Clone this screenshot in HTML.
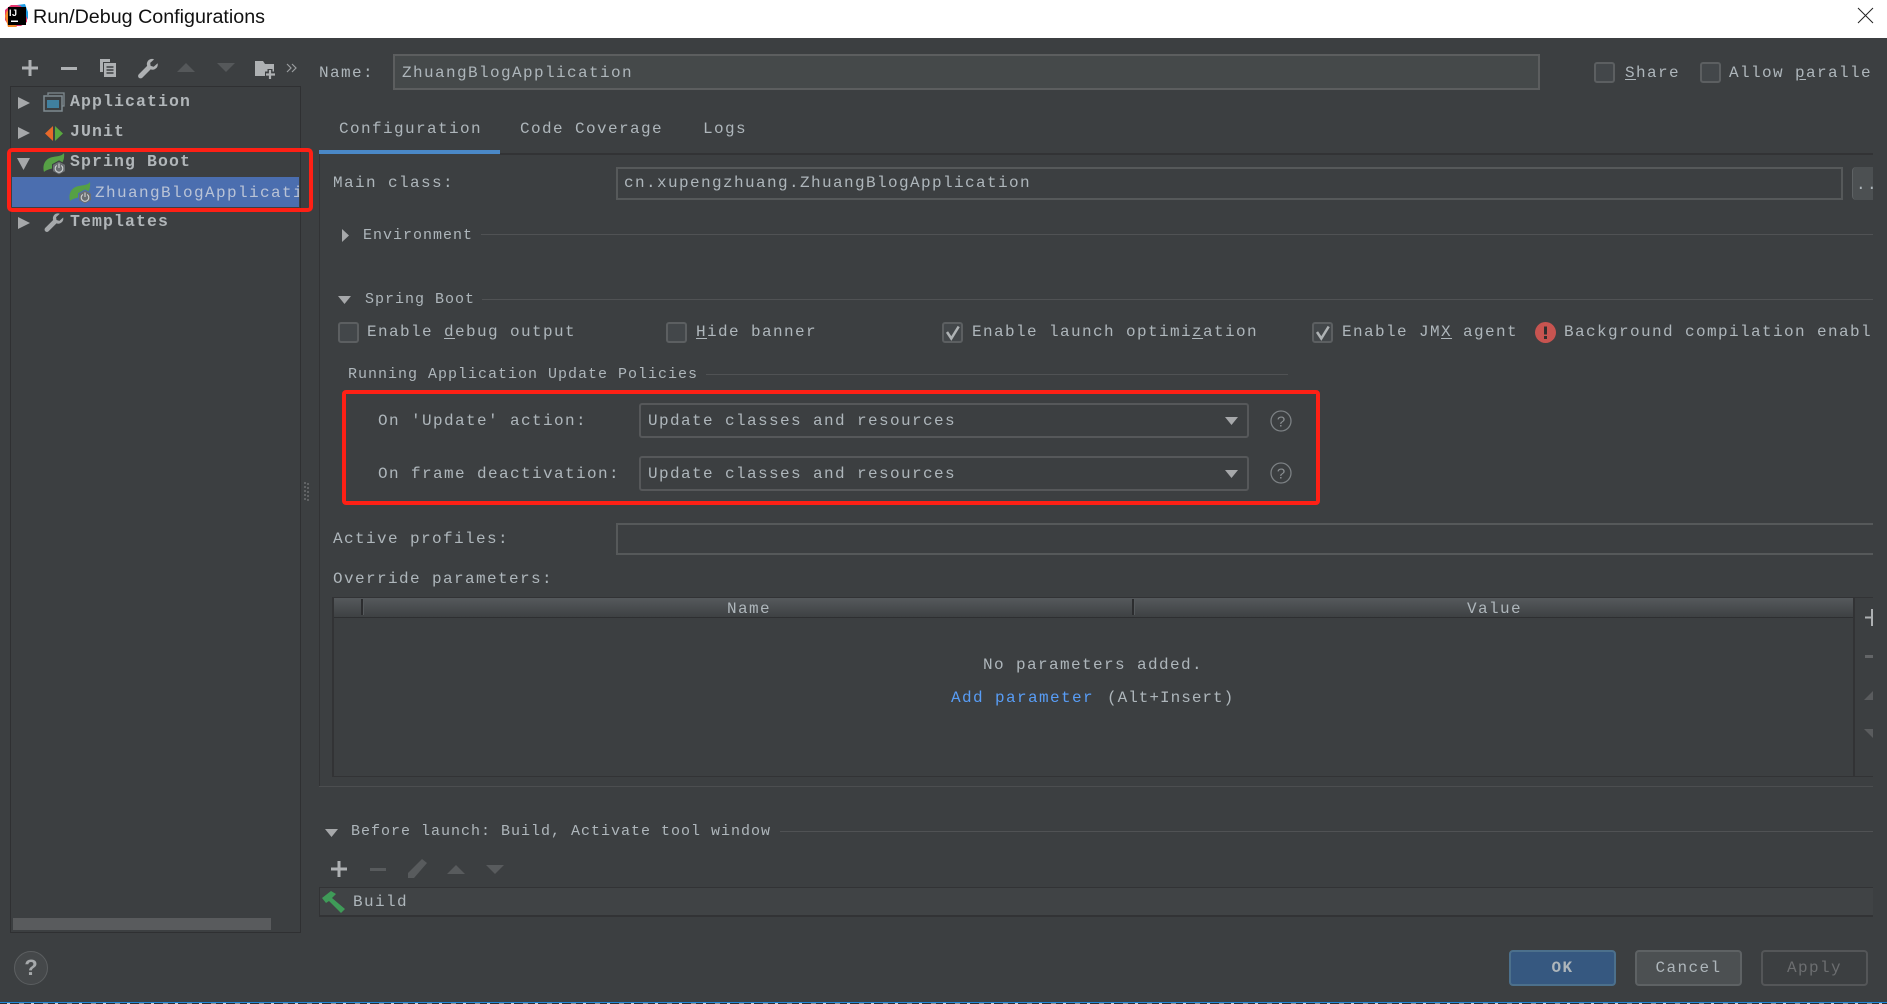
<!DOCTYPE html>
<html><head><meta charset="utf-8"><title>Run/Debug Configurations</title>
<style>
html,body{margin:0;padding:0;width:1887px;height:1004px;overflow:hidden;background:#3c3f41}
*{box-sizing:border-box}
.a{position:absolute}
.t{position:absolute;font:16px/20px "Liberation Mono",monospace;letter-spacing:1.4px;color:#aeb6bb;white-space:pre;margin-top:1px}
.s{font-size:15px;letter-spacing:1px}
.b{font-weight:bold;font-size:16.500px;letter-spacing:1.100px;color:#b1b6b9;margin-top:0}
u{text-decoration:underline;text-underline-offset:2px}
.f{position:absolute;border:2px solid #56595a;background:#3c3f41}
.cb{position:absolute;width:21px;height:21px;border:2px solid #5c5f61;border-radius:3px;background:#43474a}
.cb svg{position:absolute;left:2px;top:2px}
.combo{position:absolute;border:2px solid #56585a;border-radius:3px;background:#3c3f41;left:639px;width:610px;height:35px}
.btn{position:absolute;top:950px;width:107px;height:36px;border:2px solid #5e6264;border-radius:4px;background:#4c5052;text-align:center;font:16px/33px "Liberation Mono",monospace;letter-spacing:1.4px;color:#aeb6bb}
.l{position:absolute;height:1px;background:#505254}
svg{position:absolute;overflow:visible}
</style></head><body>
<div class="a" style="left:0;top:0;width:1887px;height:38px;background:#fff"></div>
<svg style="left:3px;top:2px" width="26" height="26" viewBox="0 0 26 26"><path d="M2 8L8 3L20 3L24 8V20L18 24H6L2 18Z" fill="#e8356f"/><path d="M14 3L22 2L25 10V18L18 4Z" fill="#1d9ce6"/><path d="M2 14L5 25H14L4 8Z" fill="#f58a2b"/><rect x="5" y="5" width="18" height="18" fill="#000"/><rect x="8" y="18.500" width="7" height="1.500" fill="#fff"/></svg>
<div class="a" style="left:9px;top:8px;font:bold 9px/10px 'Liberation Sans',sans-serif;color:#fff;letter-spacing:.5px">IJ</div>
<div class="a" style="left:33px;top:5px;font:19.700px/24px 'Liberation Sans',sans-serif;color:#111;white-space:pre">Run/Debug Configurations</div>
<svg style="left:1858px;top:8px" width="15" height="15"><path d="M0 0L15 15M15 0L0 15" stroke="#222" stroke-width="1"/></svg>

<!-- toolbar -->
<svg style="left:22px;top:60px" width="16" height="16"><path d="M8 0V16M0 8H16" stroke="#aeb1b3" stroke-width="3"/></svg>
<svg style="left:61px;top:67px" width="16" height="3"><rect width="16" height="3" fill="#aeb1b3"/></svg>
<svg style="left:99px;top:58px" width="18" height="20"><path d="M1 1H11V4H4V14H1Z" fill="#aeb1b3"/><path d="M5 5H17V19H5Z" fill="#aeb1b3"/><path d="M7.500 9H14.500M7.500 12H14.500M7.500 15H14.500" stroke="#3c3f41" stroke-width="1.500"/></svg>
<svg style="left:137px;top:58px" width="22" height="21" viewBox="0 0 24 24"><path d="M17 1a6 6 0 0 0-6 8L1.500 18.500a2.800 2.800 0 0 0 4 4L15 13a6 6 0 0 0 8-7L18.500 10 15 9 14.500 5.500 19 1.500Z" fill="#aeb1b3"/></svg>
<svg style="left:176px;top:63px" width="20" height="10"><path d="M10 0L19 9H1Z" fill="#55585a"/></svg>
<svg style="left:216px;top:63px" width="20" height="10"><path d="M10 9L19 0H1Z" fill="#55585a"/></svg>
<svg style="left:255px;top:60px" width="22" height="20"><path d="M0 1H8L10 4H19V16H0Z" fill="#aeb1b3"/><path d="M15 9V19M10 14H20" stroke="#3c3f41" stroke-width="5"/><path d="M15 10V19M11 14.500H20" stroke="#aeb1b3" stroke-width="2.200"/></svg>
<svg style="left:287px;top:64px" width="10" height="8" fill="none" stroke="#9a9d9f" stroke-width="1.200"><path d="M0 0L4 4L0 8M5 0L9 4L5 8"/></svg>

<!-- tree -->
<div class="a" style="left:10px;top:86px;width:291px;height:847px;border:1px solid #2f3032"></div>
<div class="a" style="left:12px;top:177px;width:287px;height:30px;background:#4b6eaf"></div>
<svg style="left:18px;top:97px" width="13" height="12"><path d="M0 0L12 6L0 12Z" fill="#a6a8aa"/></svg>
<svg style="left:18px;top:127px" width="13" height="12"><path d="M0 0L12 6L0 12Z" fill="#a6a8aa"/></svg>
<svg style="left:17px;top:158px" width="14" height="12"><path d="M0 0H13L6.500 12Z" fill="#a6a8aa"/></svg>
<svg style="left:18px;top:217px" width="13" height="12"><path d="M0 0L12 6L0 12Z" fill="#a6a8aa"/></svg>

<svg style="left:43px;top:92px" width="22" height="20"><path d="M5 3V1H21V14H19" fill="none" stroke="#7f8b91" stroke-width="1.300"/><rect x="1" y="4" width="18" height="15" fill="#3c3f41" stroke="#7f8b91" stroke-width="1.500"/><rect x="4" y="8" width="12" height="8" fill="#40809f"/></svg>
<svg style="left:45px;top:126px" width="18" height="15"><path d="M8 0V15L0 7.500Z" fill="#e8692a"/><path d="M10 0V15L18 7.500Z" fill="#59a83f"/></svg>

<svg style="left:43px;top:153px" width="24" height="22"><path d="M21 0C22 8 18 14 11 15C7 16 3 17 1 19C-1 11 3 5 10 4C15 3 19 3 21 0Z" fill="#56a045"/><path d="M16 8L22.500 11.500V18.500L16 22L9.500 18.500V11.500Z" fill="#6a6e71" stroke="#3c3f41" stroke-width="1"/><path d="M13.800 12.400A3.800 3.800 0 1 0 18.200 12.400M16 10.500V15" fill="none" stroke="#cfd2d3" stroke-width="1.100"/></svg>
<svg style="left:69px;top:182px" width="24" height="22"><path d="M21 0C22 8 18 14 11 15C7 16 3 17 1 19C-1 11 3 5 10 4C15 3 19 3 21 0Z" fill="#56a045"/><path d="M16 8L22.500 11.500V18.500L16 22L9.500 18.500V11.500Z" fill="#6a6e71" stroke="#4b6eaf" stroke-width="1"/><path d="M13.800 12.400A3.800 3.800 0 1 0 18.200 12.400M16 10.500V15" fill="none" stroke="#cfd2d3" stroke-width="1.100"/></svg>
<svg style="left:44px;top:212px" width="20" height="21" viewBox="0 0 24 24"><path d="M17 1a6 6 0 0 0-6 8L1.500 18.500a2.800 2.800 0 0 0 4 4L15 13a6 6 0 0 0 8-7L18.500 10 15 9 14.500 5.500 19 1.500Z" fill="#a6a9ab"/></svg>

<div class="t b" style="left:70px;top:92px">Application</div>
<div class="t b" style="left:70px;top:122px">JUnit</div>
<div class="t b" style="left:70px;top:152px">Spring Boot</div>
<div class="a" style="left:95px;top:181px;width:204px;height:24px;overflow:hidden"><div class="t" style="left:0;top:1px;color:#b9c3d6">ZhuangBlogApplication</div></div>
<div class="t b" style="left:70px;top:212px">Templates</div>
<div class="a" style="left:13px;top:918px;width:258px;height:12px;background:#595b5d"></div>
<svg style="left:304px;top:481px" width="5" height="22"><path d="M1 1V21M4 2V22" stroke="#6c6f71" stroke-width="1.500" stroke-dasharray="2 2"/></svg>

<!-- name row -->
<div class="t" style="left:319px;top:62px">Name:</div>
<div class="f" style="left:393px;top:54px;width:1147px;height:36px;background:#45494a;border-color:#5c5e5f"></div>
<div class="t" style="left:402px;top:62px">ZhuangBlogApplication</div>
<div class="cb" style="left:1594px;top:62px"></div>
<div class="t" style="left:1625px;top:62px"><u>S</u>hare</div>
<div class="cb" style="left:1700px;top:62px"></div>
<div class="a" style="left:1729px;top:60px;width:144px;height:26px;overflow:hidden"><div class="t" style="left:0;top:2px">Allow <u>p</u>arallel run</div></div>

<!-- tabs -->
<div class="t" style="left:339px;top:118px">Configuration</div>
<div class="t" style="left:520px;top:118px">Code Coverage</div>
<div class="t" style="left:703px;top:118px">Logs</div>
<div class="a" style="left:319px;top:150px;width:181px;height:4px;background:#4a88c7"></div>
<div class="a" style="left:500px;top:153px;width:1373px;height:2px;background:#323335"></div>
<div class="a" style="left:319px;top:154px;width:1px;height:632px;background:#323335"></div>
<div class="a" style="left:319px;top:786px;width:1554px;height:1px;background:#4c4e50"></div>

<!-- main class -->
<div class="t" style="left:333px;top:172px">Main class:</div>
<div class="f" style="left:616px;top:167px;width:1227px;height:33px"></div>
<div class="t" style="left:624px;top:172px">cn.xupengzhuang.ZhuangBlogApplication</div>
<div class="a" style="left:1852px;top:167px;width:21px;height:33px;background:#4c5052;border-radius:4px 0 0 4px;border-left:1px solid #5e6264;overflow:hidden"><div class="t" style="left:3px;top:7px">..</div></div>

<!-- environment -->
<svg style="left:342px;top:229px" width="8" height="13"><path d="M0 0L7 6.500L0 13Z" fill="#a6a8aa"/></svg>
<div class="t s" style="left:363px;top:225px">Environment</div>
<div class="l" style="left:481px;top:234px;width:1392px"></div>

<!-- spring boot -->
<svg style="left:338px;top:296px" width="14" height="8"><path d="M0 0H13L6.500 8Z" fill="#a6a8aa"/></svg>
<div class="t s" style="left:365px;top:289px">Spring Boot</div>
<div class="l" style="left:482px;top:299px;width:1391px"></div>

<div class="cb" style="left:338px;top:322px"></div><div class="t" style="left:367px;top:321px">Enable <u>d</u>ebug output</div>
<div class="cb" style="left:666px;top:322px"></div><div class="t" style="left:696px;top:321px"><u>H</u>ide banner</div>
<div class="cb" style="left:942px;top:322px"><svg width="17" height="17"><path d="M1 6L5.300 12.500L12.700 0.500" fill="none" stroke="#aeb2b4" stroke-width="2.500"/></svg></div><div class="t" style="left:972px;top:321px">Enable launch optimi<u>z</u>ation</div>
<div class="cb" style="left:1312px;top:322px"><svg width="17" height="17"><path d="M1 6L5.300 12.500L12.700 0.500" fill="none" stroke="#aeb2b4" stroke-width="2.500"/></svg></div><div class="t" style="left:1342px;top:321px">Enable JM<u>X</u> agent</div>
<svg style="left:1535px;top:322px" width="21" height="21"><circle cx="10.500" cy="10.500" r="10.500" fill="#c75450"/><rect x="9" y="4.500" width="3" height="8" fill="#2f2f2f"/><rect x="9" y="14" width="3" height="3" fill="#2f2f2f"/></svg>
<div class="a" style="left:1564px;top:320px;width:309px;height:26px;overflow:hidden"><div class="t" style="left:0;top:1px">Background compilation enabled</div></div>

<div class="t s" style="left:348px;top:364px">Running Application Update Policies</div>
<div class="l" style="left:706px;top:374px;width:582px"></div>

<div class="t" style="left:378px;top:410px">On 'Update' action:</div>
<div class="t" style="left:378px;top:463px">On frame deactivation:</div>
<div class="combo" style="top:403px"></div>
<div class="combo" style="top:456px"></div>
<div class="t" style="left:648px;top:410px">Update classes and resources</div>
<div class="t" style="left:648px;top:463px">Update classes and resources</div>
<svg style="left:1225px;top:417px" width="13" height="8"><path d="M0 0H13L6.500 8Z" fill="#a6a8aa"/></svg>
<svg style="left:1225px;top:470px" width="13" height="8"><path d="M0 0H13L6.500 8Z" fill="#a6a8aa"/></svg>
<svg style="left:1270px;top:410px" width="22" height="22"><circle cx="11" cy="11" r="10" fill="none" stroke="#7c8184" stroke-width="1.300"/><text x="11" y="16.500" text-anchor="middle" font-family="Liberation Sans" font-size="15" fill="#8a8f92">?</text></svg>
<svg style="left:1270px;top:462px" width="22" height="22"><circle cx="11" cy="11" r="10" fill="none" stroke="#7c8184" stroke-width="1.300"/><text x="11" y="16.500" text-anchor="middle" font-family="Liberation Sans" font-size="15" fill="#8a8f92">?</text></svg>

<!-- active profiles -->
<div class="t" style="left:333px;top:528px">Active profiles:</div>
<div class="f" style="left:616px;top:523px;width:1257px;height:32px;border-right:0"></div>
<div class="t" style="left:333px;top:568px">Override parameters:</div>

<!-- table -->
<div class="a" style="left:332px;top:597px;width:1522px;height:180px;border:2px solid #323335;border-width:1px 2px 1px 2px;border-right:0"></div>
<div class="a" style="left:334px;top:598px;width:1519px;height:20px;background:linear-gradient(#55595c,#3e4143);border-bottom:1px solid #2e2f31"></div>
<div class="a" style="left:361px;top:599px;width:3px;height:16px;background:#2c2d2f;border-right:1px solid #55595c"></div>
<div class="a" style="left:1132px;top:599px;width:3px;height:16px;background:#2c2d2f;border-right:1px solid #55595c"></div>
<div class="a" style="left:1853px;top:597px;width:2px;height:180px;background:#323335"></div>
<div class="a" style="left:1855px;top:597px;width:18px;height:1px;background:#323335"></div>
<div class="a" style="left:1855px;top:776px;width:18px;height:1px;background:#323335"></div>
<div class="t" style="left:727px;top:598px">Name</div>
<div class="t" style="left:1467px;top:598px">Value</div>
<div class="t" style="left:983px;top:654px">No parameters added.</div>
<div class="t" style="left:951px;top:687px;color:#589df6">Add parameter</div>
<div class="t" style="left:1107px;top:687px;letter-spacing:1px">(Alt+Insert)</div>
<svg style="left:1865px;top:609px" width="8" height="17"><path d="M7 0V17M0 8.500H8" stroke="#aeb1b3" stroke-width="2"/></svg>
<svg style="left:1865px;top:655px" width="8" height="3"><rect width="8" height="3" fill="#636567"/></svg>
<svg style="left:1864px;top:691px" width="9" height="9"><path d="M9 0V9H0Z" fill="#5a5c5e"/></svg>
<svg style="left:1864px;top:729px" width="9" height="9"><path d="M0 0H9V9Z" fill="#5a5c5e"/></svg>

<!-- before launch -->
<svg style="left:325px;top:829px" width="13" height="8"><path d="M0 0H13L6.500 8Z" fill="#a6a8aa"/></svg>
<div class="t s" style="left:351px;top:821px">Before launch: Build, Activate tool window</div>
<div class="l" style="left:780px;top:831px;width:1093px"></div>
<svg style="left:331px;top:861px" width="16" height="16"><path d="M8 0V16M0 8H16" stroke="#aeb1b3" stroke-width="3"/></svg>
<svg style="left:370px;top:868px" width="16" height="3"><rect width="16" height="3" fill="#585b5d"/></svg>
<svg style="left:408px;top:858px" width="20" height="21"><path d="M14 1L19 5L6 20H0V15Z" fill="#585b5d"/></svg>
<svg style="left:447px;top:865px" width="18" height="9"><path d="M9 0L18 9H0Z" fill="#585b5d"/></svg>
<svg style="left:486px;top:865px" width="18" height="9"><path d="M9 9L18 0H0Z" fill="#585b5d"/></svg>
<div class="a" style="left:319px;top:887px;width:1554px;height:30px;background:#404345;border:1px solid #323335;border-width:1px 0 2px 1px"></div>
<svg style="left:322px;top:891px" width="24" height="22"><path d="M0 7L9 0L14 3L10 7L23 18L19 22L7 10L4 12Z" fill="#3f9b58"/></svg>
<div class="t" style="left:353px;top:891px">Build</div>

<!-- bottom -->
<div class="a" style="left:14px;top:951px;width:34px;height:34px;border-radius:50%;background:#45484a;border:1px solid #5c5f61;text-align:center;font:bold 22px/32px 'Liberation Sans',sans-serif;color:#a6a9ab">?</div>
<div class="btn" style="left:1509px;background:#365880;border-color:#4c708c;font-weight:bold">OK</div>
<div class="btn" style="left:1635px">Cancel</div>
<div class="btn" style="left:1761px;background:#3c3f41;border-color:#545658;color:#6c6e70">Apply</div>
<div class="a" style="left:0;top:1002px;width:1887px;height:1px;background:#1f86d8"></div>
<div class="a" style="left:0;top:1003px;width:1887px;height:1px;background:repeating-linear-gradient(90deg,#2b2f33 0 7px,#c8ccd0 7px 10px,#2b2f33 10px 19px,#8d9296 19px 24px)"></div>

<!-- red annotations -->
<div class="a" style="left:7px;top:148px;width:306px;height:64px;border:4.500px solid #fe2015;border-radius:5px"></div>
<div class="a" style="left:342px;top:390px;width:978px;height:115px;border:4.500px solid #fe2015;border-radius:4px"></div>
</body></html>
